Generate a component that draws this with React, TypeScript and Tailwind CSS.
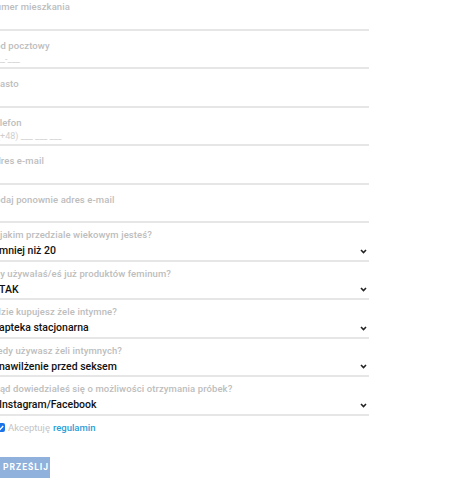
import React from 'react'

type Field = {
  label: string
  placeholder?: string
  value?: string
  select?: boolean
}

const fields: Field[] = [
  { label: 'Numer mieszkania' },
  { label: 'Kod pocztowy', placeholder: '__-___' },
  { label: 'Miasto' },
  { label: 'Telefon', placeholder: '(+48) ___ ___ ___' },
  { label: 'Adres e-mail' },
  { label: 'Podaj ponownie adres e-mail' },
  { label: 'W jakim przedziale wiekowym jesteś?', value: 'mniej niż 20', select: true },
  { label: 'Czy używałaś/eś już produktów feminum?', value: 'TAK', select: true },
  { label: 'Gdzie kupujesz żele intymne?', value: 'apteka stacjonarna', select: true },
  { label: 'Kiedy używasz żeli intymnych?', value: 'nawilżenie przed seksem', select: true },
  { label: 'Skąd dowiedziałeś się o możliwości otrzymania próbek?', value: 'Instagram/Facebook', select: true },
]

function Chevron() {
  return (
    <svg width="7" height="5" viewBox="0 0 7 5" className="mr-[2px]">
      <path d="M1 1 L3.5 3.5 L6 1" fill="none" stroke="#222" strokeWidth="1.6" />
    </svg>
  )
}

function FormField({ field }: { field: Field }) {
  return (
    <div className={`flex h-[38.5px] flex-col border-b-2 border-[#e6e6e6] ${field.select ? 'pt-[6px]' : 'pt-[9px]'}`}>
      <div className="text-[9.5px] font-medium leading-[11px] tracking-[0.01em] text-[#bdbdbd]">{field.label}</div>
      <div className={`flex h-[16px] items-center justify-between ${field.select ? 'mt-[3px]' : 'mt-[1px]'}`}>
        {field.select ? (
          <span className="pl-[10px] text-[10.5px] font-medium text-[#111]">{field.value}</span>
        ) : (
          <span className="pl-[8px] text-[9px] text-[#cfcfcf]">{field.placeholder}</span>
        )}
        {field.select ? <Chevron /> : null}
      </div>
    </div>
  )
}

export default function App() {
  return (
    <div className="h-[500px] w-[450px] overflow-hidden bg-white" style={{ fontFamily: 'Roboto, "Noto Sans", sans-serif' }}>
      <div className="-ml-[11px] -mt-[8px] w-[380px]">
        {fields.map((f) => (
          <FormField key={f.label} field={f} />
        ))}
        <label className="mt-[5px] flex items-center gap-[3px] pl-[7px] text-[9.5px]">
          <span className="flex h-[9px] w-[9px] items-center justify-center rounded-[2px] bg-[#1a73e8]">
            <svg width="7" height="6" viewBox="0 0 7 6">
              <path d="M0.8 3 L2.7 4.8 L6.2 1" fill="none" stroke="#fff" strokeWidth="1.4" />
            </svg>
          </span>
          <span className="text-[#c4c4c4]">Akceptuję</span>
          <span className="font-medium text-[#2aa0d8]">regulamin</span>
        </label>
        <button className="mt-[22px] h-[21px] w-[61px] bg-[#8fb1dc] pl-[14px] text-left text-[8.5px] font-bold tracking-[0.12em] text-white">
          PRZEŚLIJ
        </button>
      </div>
    </div>
  )
}
